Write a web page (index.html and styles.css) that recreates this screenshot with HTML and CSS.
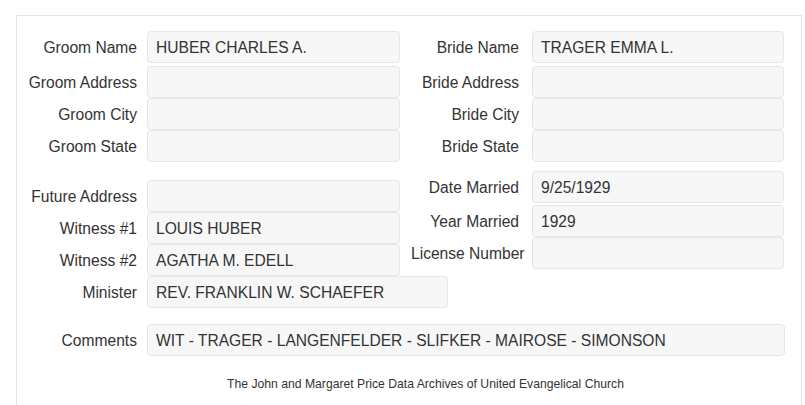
FILE: index.html
```html
<!DOCTYPE html>
<html lang="en">
<head>
    <meta charset="UTF-8">
    <meta name="viewport" content="width=device-width, initial-scale=1.0">
    <title>Marriage Record</title>
    <link rel="stylesheet" href="styles.css">
</head>
<body>
    <div class="record">
        <div class="pairs">
            <div class="row first">
                <div class="field"><label>Groom Name</label><input type="text" readonly value="HUBER CHARLES A."></div>
                <div class="field right"><label>Bride Name</label><input type="text" readonly value="TRAGER EMMA L."></div>
            </div>
            <div class="row">
                <div class="field"><label>Groom Address</label><input type="text" readonly value=""></div>
                <div class="field right"><label>Bride Address</label><input type="text" readonly value=""></div>
            </div>
            <div class="row">
                <div class="field"><label>Groom City</label><input type="text" readonly value=""></div>
                <div class="field right"><label>Bride City</label><input type="text" readonly value=""></div>
            </div>
            <div class="row">
                <div class="field"><label>Groom State</label><input type="text" readonly value=""></div>
                <div class="field right"><label>Bride State</label><input type="text" readonly value=""></div>
            </div>
        </div>

        <div class="split">
            <div class="col col-left">
                <div class="field"><label>Future Address</label><input type="text" readonly value=""></div>
                <div class="field"><label>Witness #1</label><input type="text" readonly value="LOUIS HUBER"></div>
                <div class="field"><label>Witness #2</label><input type="text" readonly value="AGATHA M. EDELL"></div>
                <div class="field wide"><label>Minister</label><input type="text" readonly value="REV. FRANKLIN W. SCHAEFER"></div>
            </div>
            <div class="col col-right">
                <div class="field right"><label>Date Married</label><input type="text" readonly value="9/25/1929"></div>
                <div class="field right gap"><label>Year Married</label><input type="text" readonly value="1929"></div>
                <div class="field right"><label>License Number</label><input type="text" readonly value=""></div>
            </div>
        </div>

        <div class="field comments"><label>Comments</label><input type="text" readonly value="WIT - TRAGER - LANGENFELDER - SLIFKER - MAIROSE - SIMONSON"></div>

        <p class="footer">The John and Margaret Price Data Archives of United Evangelical Church</p>
    </div>
</body>
</html>
```

FILE: styles.css
```css
body {
    margin: 0;
    font-family: "Liberation Sans", Arial, sans-serif;
    font-size: 15.6px;
    color: #333;
    background-color: white;
}
.record {
    margin: 15px 0 0 16px;
    width: 767px;
    padding: 15px 17px 30px 0;
    border: 1px solid #e5e5e5;
}
.row {
    display: flex;
}
.row.first {
    margin-bottom: 3px;
}
.field {
    display: flex;
    align-items: center;
    height: 32px;
}
.field label {
    flex: none;
    width: 120px;
    margin-right: 10px;
    padding-top: 1px;
    text-align: right;
    white-space: nowrap;
}
.field input {
    flex: none;
    box-sizing: border-box;
    width: 253px;
    height: 32px;
    margin: 0;
    padding: 1px 8px 0;
    border: 1px solid #e6e6e6;
    border-radius: 4px;
    background-color: #f7f7f7;
    font: inherit;
    color: #333;
    outline: none;
}
.field.right {
    margin-left: 11px;
}
.field.right label {
    width: 108px;
    margin-right: 13px;
}
.field.right input {
    width: 252px;
}
.split {
    display: flex;
}
.col-left {
    flex: none;
    width: 383px;
    padding-top: 18px;
}
.col-right {
    padding-top: 9px;
}
.field.gap {
    margin-top: 2px;
}
.field.wide input {
    width: 301px;
}
.comments {
    margin-top: 16px;
}
.comments input {
    width: 638px;
}
.footer {
    margin: 20px 0 0;
    padding-left: 50px;
    font-size: 12.2px;
    line-height: 17px;
    text-align: center;
}
```
